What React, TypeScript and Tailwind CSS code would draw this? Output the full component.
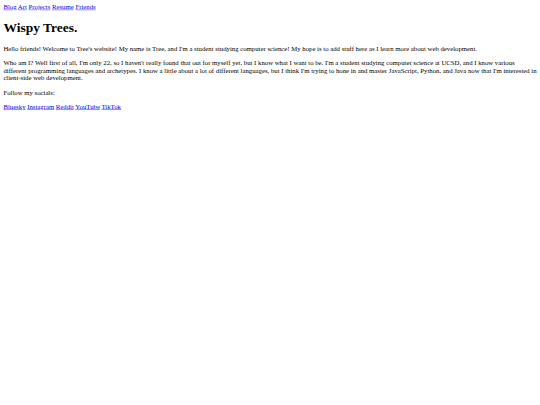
export default function App() {
  return (
    <div className="w-[540px] h-[405px] overflow-hidden bg-white">
      <div className="w-[1280px] origin-top-left scale-[0.421875] p-[8px] font-['Liberation_Serif','Times_New_Roman',serif] text-[16px] leading-[normal] text-black">
        <nav>
          <a href="#" className="text-[#0000EE] underline">Blog</a>{" "}
          <a href="#" className="text-[#0000EE] underline">Art</a>{" "}
          <a href="#" className="text-[#0000EE] underline">Projects</a>{" "}
          <a href="#" className="text-[#0000EE] underline">Resume</a>{" "}
          <a href="#" className="text-[#0000EE] underline">Friends</a>
        </nav>
        <h1 className="text-[32px] font-bold my-[21.44px]">Wispy Trees.</h1>
        <p className="my-[16px]">
          Hello friends! Welcome to Tree's website! My name is Tree, and I'm a student studying computer science! My hope is to add stuff here as I learn more about web development.
        </p>
        <p className="my-[16px]">
          Who am I? Well first of all, I'm only 22, so I haven't really found that out for myself yet, but I know what I want to be. I'm a student studying computer science at UCSD, and I know various different programming languages and archetypes. I know a little about a lot of different languages, but I think I'm trying to hone in and master JavaScript, Python, and Java now that I'm interested in client-side web development.
        </p>
        <p className="my-[16px]">Follow my socials:</p>
        <p className="my-[16px]">
          <a href="#" className="text-[#0000EE] underline">Bluesky</a>{" "}
          <a href="#" className="text-[#0000EE] underline">Instagram</a>{" "}
          <a href="#" className="text-[#0000EE] underline">Reddit</a>{" "}
          <a href="#" className="text-[#0000EE] underline">YouTube</a>{" "}
          <a href="#" className="text-[#0000EE] underline">TikTok</a>
        </p>
      </div>
    </div>
  );
}
